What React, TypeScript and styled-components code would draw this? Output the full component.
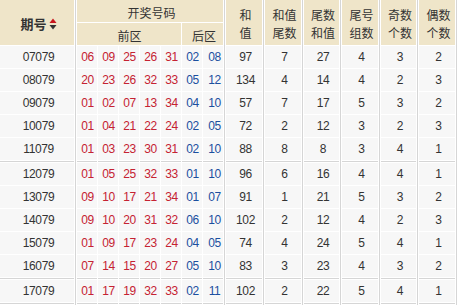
import React from 'react';
import styled, { createGlobalStyle } from 'styled-components';

const GlobalStyle = createGlobalStyle`
  html, body {
    margin: 0;
    padding: 0;
    background: #fff;
  }
  body {
    font-family: "Liberation Sans", "Noto Sans CJK SC", sans-serif;
  }
`

const LINE_GRAY = '#d6d6d6'

// 세로줄: 일반칸은 흰 줄 하나, 큰 구분은 흰-회색-흰
function rightLine(major?: boolean) {
  if (major) return 'inset -1px 0 0 #fff, inset -2px 0 0 ' + LINE_GRAY + ', inset -3px 0 0 #fff'
  return 'inset -1px 0 0 #fff'
}
function bottomLine(groupEnd?: boolean) {
  if (groupEnd) return 'inset 0 -1px 0 #fff, inset 0 -2px 0 ' + LINE_GRAY + ', inset 0 -3px 0 #fff'
  return 'inset 0 -1px 0 #fff'
}
function toneColor(tone?: string) {
  if (tone === 'red') return '#c52232'
  if (tone === 'blue') return '#1b4f9f'
  return '#333'
}

const Table = styled.table`
  width: 458px;
  table-layout: fixed;
  border-collapse: separate;
  border-spacing: 0;
`
const HeadRow = styled.tr`
  height: 23px;
`
const Row = styled.tr<{ $groupEnd?: boolean }>`
  height: ${(props) => (props.$groupEnd ? '25px' : '23px')};
`
const Th = styled.th<{ $major?: boolean }>`
  padding: 2px 0 0;
  background: #efe5c9;
  color: #333;
  font-family: "Noto Sans CJK SC", sans-serif;
  font-size: 12px;
  font-weight: normal;
  line-height: 18px;
  text-align: center;
  vertical-align: middle;
  box-shadow: ${(props) => rightLine(props.$major) + ', ' + bottomLine(false)};
`
const IssueHead = styled(Th)`
  font-size: 13px;
  font-weight: bold;
`
const HeadInner = styled.span`
  display: inline-flex;
  align-items: center;
  gap: 2px;
`
const Td = styled.td<{ $major?: boolean; $groupEnd?: boolean; $tone?: string }>`
  padding: 0 0 ${(props) => (props.$groupEnd ? '3px' : '1px')};
  background: #f7f7f7;
  color: ${(props) => toneColor(props.$tone)};
  font-size: 12px;
  letter-spacing: -0.4px;
  text-align: center;
  vertical-align: middle;
  box-shadow: ${(props) => rightLine(props.$major) + ', ' + bottomLine(props.$groupEnd)};
`

const SortIcon = () => (
  <svg width="8" height="12" viewBox="0 0 8 12">
    <path d="M4 0.5 L7.5 5 L0.5 5 Z" fill="#c8161d" />
    <path d="M0.5 7 L7.5 7 L4 11.5 Z" fill="#333" />
  </svg>
)

type Draw = [string, string[], string[], number[]]

const rows: Draw[] = [
  ['07079', ['06', '09', '25', '26', '31'], ['02', '08'], [97, 7, 27, 4, 3, 2]],
  ['08079', ['20', '23', '26', '32', '33'], ['05', '12'], [134, 4, 14, 4, 2, 3]],
  ['09079', ['01', '02', '07', '13', '34'], ['04', '10'], [57, 7, 17, 5, 3, 2]],
  ['10079', ['01', '04', '21', '22', '24'], ['02', '05'], [72, 2, 12, 3, 2, 3]],
  ['11079', ['01', '03', '23', '30', '31'], ['02', '10'], [88, 8, 8, 3, 4, 1]],
  ['12079', ['01', '05', '25', '32', '33'], ['01', '10'], [96, 6, 16, 4, 4, 1]],
  ['13079', ['09', '10', '17', '21', '34'], ['01', '07'], [91, 1, 21, 5, 3, 2]],
  ['14079', ['09', '10', '20', '31', '32'], ['06', '10'], [102, 2, 12, 4, 2, 3]],
  ['15079', ['01', '09', '17', '23', '24'], ['04', '05'], [74, 4, 24, 5, 4, 1]],
  ['16079', ['07', '14', '15', '20', '27'], ['05', '10'], [83, 3, 23, 4, 3, 2]],
  ['17079', ['01', '17', '19', '32', '33'], ['02', '11'], [102, 2, 22, 5, 4, 1]],
]

const statHeads = [
  ['和', '值'],
  ['和值', '尾数'],
  ['尾数', '和值'],
  ['尾号', '组数'],
  ['奇数', '个数'],
  ['偶数', '个数'],
]
const colWidths = [77, 21, 21, 21, 21, 21, 21, 23, 39, 39, 38, 39, 38, 39]

const App = () => {
  return (
    <>
      <GlobalStyle />
      <Table>
        <colgroup>
          {colWidths.map((w, i) => (
            <col key={i} style={{ width: w }} />
          ))}
        </colgroup>
        <thead>
          <HeadRow>
            <IssueHead rowSpan={2} $major>
              <HeadInner>
                期号
                <SortIcon />
              </HeadInner>
            </IssueHead>
            <Th colSpan={7} $major>开奖号码</Th>
            {statHeads.map(([a, b]) => (
              <Th key={a + b} rowSpan={2} $major>
                {a}
                <br />
                {b}
              </Th>
            ))}
          </HeadRow>
          <HeadRow>
            <Th colSpan={5}>前区</Th>
            <Th colSpan={2} $major>后区</Th>
          </HeadRow>
        </thead>
        <tbody>
          {rows.map(([issue, front, back, stats], i) => {
            const groupEnd = i === 4 || i === 9 || i === 10
            return (
              <Row key={issue} $groupEnd={groupEnd}>
                <Td $major $groupEnd={groupEnd}>{issue}</Td>
                {front.map((n, j) => (
                  <Td key={'f' + j} $tone="red" $groupEnd={groupEnd}>{n}</Td>
                ))}
                {back.map((n, j) => (
                  <Td key={'b' + j} $tone="blue" $major={j === 1} $groupEnd={groupEnd}>{n}</Td>
                ))}
                {stats.map((s, j) => (
                  <Td key={'s' + j} $major $groupEnd={groupEnd}>{s}</Td>
                ))}
              </Row>
            )
          })}
        </tbody>
      </Table>
    </>
  );
};

export default App;
